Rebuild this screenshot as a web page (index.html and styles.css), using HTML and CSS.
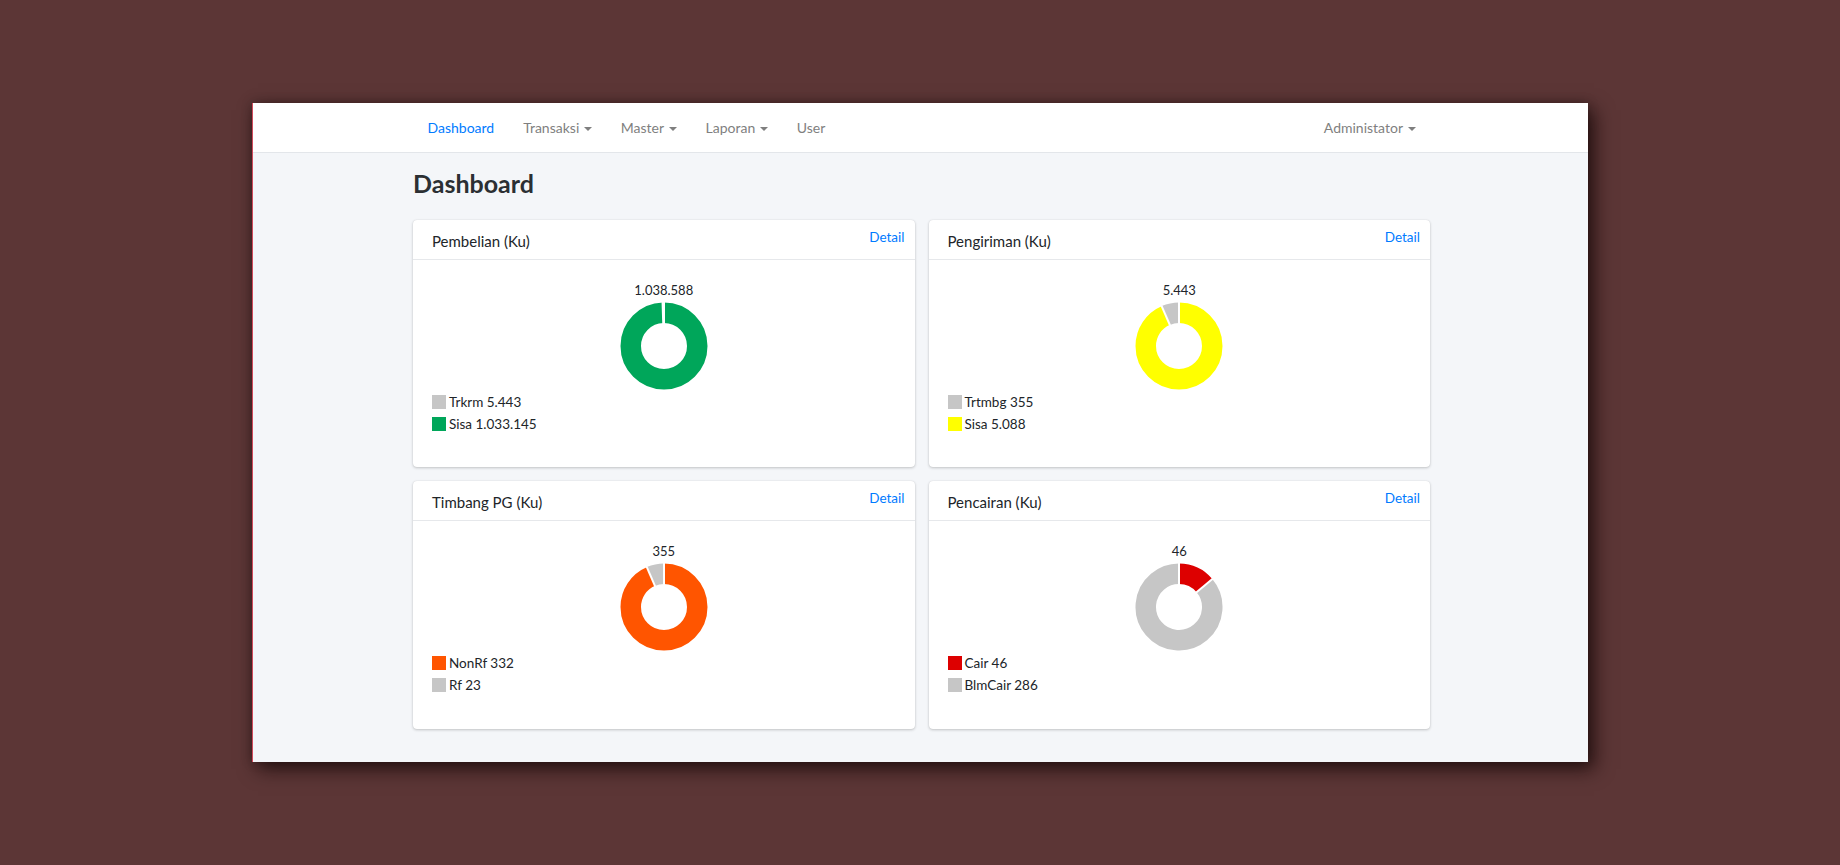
FILE: index.html
```html
<!DOCTYPE html>
<html lang="id">
<head>
<meta charset="utf-8">
<title>Dashboard</title>
<link rel="stylesheet" href="styles.css">
</head>
<body>
<div class="frame">
  <nav class="navbar">
    <div class="nav-inner">
      <ul class="nav-list">
        <li><a class="nav-link active" href="#">Dashboard</a></li>
        <li><a class="nav-link dropdown" href="#">Transaksi</a></li>
        <li><a class="nav-link dropdown" href="#">Master</a></li>
        <li><a class="nav-link dropdown" href="#">Laporan</a></li>
        <li><a class="nav-link" href="#">User</a></li>
      </ul>
      <a class="nav-link dropdown" href="#">Administator</a>
    </div>
  </nav>
  <main class="content">
    <h1 class="page-title">Dashboard</h1>
    <div class="grid">
      <section class="card">
        <header class="card-header">
          <h2 class="card-title">Pembelian (Ku)</h2>
          <a class="detail" href="#">Detail</a>
        </header>
        <div class="card-body">
          <div class="chart-label">1.038.588</div>
          <svg class="donut" width="88" height="88" viewBox="0 0 88 88">
            <circle cx="44" cy="44" r="33.25" fill="none" stroke="#c6c6c6" stroke-width="20.5" stroke-dasharray="1.10 300" transform="rotate(-91.9 44 44)"/>
            <circle cx="44" cy="44" r="33.25" fill="none" stroke="#00a65a" stroke-width="20.5" stroke-dasharray="207.82 300" transform="rotate(-90 44 44)"/>
            <line class="sep" x1="44" y1="23" x2="44" y2="0" transform="rotate(-1.9 44 44)"/>
            <line class="sep" x1="44" y1="23" x2="44" y2="0"/>
          </svg>
          <ul class="legend">
            <li><span class="swatch gray"></span>Trkrm 5.443</li>
            <li><span class="swatch green"></span>Sisa 1.033.145</li>
          </ul>
        </div>
      </section>
      <section class="card">
        <header class="card-header">
          <h2 class="card-title">Pengiriman (Ku)</h2>
          <a class="detail" href="#">Detail</a>
        </header>
        <div class="card-body">
          <div class="chart-label">5.443</div>
          <svg class="donut" width="88" height="88" viewBox="0 0 88 88">
            <circle cx="44" cy="44" r="33.25" fill="none" stroke="#c6c6c6" stroke-width="20.5" stroke-dasharray="13.64 300" transform="rotate(-113.5 44 44)"/>
            <circle cx="44" cy="44" r="33.25" fill="none" stroke="#ffff00" stroke-width="20.5" stroke-dasharray="195.28 300" transform="rotate(-90 44 44)"/>
            <line class="sep" x1="44" y1="23" x2="44" y2="0" transform="rotate(-23.5 44 44)"/>
            <line class="sep" x1="44" y1="23" x2="44" y2="0"/>
          </svg>
          <ul class="legend">
            <li><span class="swatch gray"></span>Trtmbg 355</li>
            <li><span class="swatch yellow"></span>Sisa 5.088</li>
          </ul>
        </div>
      </section>
      <section class="card">
        <header class="card-header">
          <h2 class="card-title">Timbang PG (Ku)</h2>
          <a class="detail" href="#">Detail</a>
        </header>
        <div class="card-body">
          <div class="chart-label">355</div>
          <svg class="donut" width="88" height="88" viewBox="0 0 88 88">
            <circle cx="44" cy="44" r="33.25" fill="none" stroke="#c6c6c6" stroke-width="20.5" stroke-dasharray="13.52 300" transform="rotate(-113.3 44 44)"/>
            <circle cx="44" cy="44" r="33.25" fill="none" stroke="#ff5500" stroke-width="20.5" stroke-dasharray="195.40 300" transform="rotate(-90 44 44)"/>
            <line class="sep" x1="44" y1="23" x2="44" y2="0" transform="rotate(-23.3 44 44)"/>
            <line class="sep" x1="44" y1="23" x2="44" y2="0"/>
          </svg>
          <ul class="legend">
            <li><span class="swatch orange"></span>NonRf 332</li>
            <li><span class="swatch gray"></span>Rf 23</li>
          </ul>
        </div>
      </section>
      <section class="card">
        <header class="card-header">
          <h2 class="card-title">Pencairan (Ku)</h2>
          <a class="detail" href="#">Detail</a>
        </header>
        <div class="card-body">
          <div class="chart-label">46</div>
          <svg class="donut" width="88" height="88" viewBox="0 0 88 88">
            <circle cx="44" cy="44" r="33.25" fill="none" stroke="#dd0000" stroke-width="20.5" stroke-dasharray="28.96 300" transform="rotate(-90 44 44)"/>
            <circle cx="44" cy="44" r="33.25" fill="none" stroke="#c6c6c6" stroke-width="20.5" stroke-dasharray="179.96 300" transform="rotate(-40.1 44 44)"/>
            <line class="sep" x1="44" y1="23" x2="44" y2="0" transform="rotate(49.9 44 44)"/>
            <line class="sep" x1="44" y1="23" x2="44" y2="0"/>
          </svg>
          <ul class="legend">
            <li><span class="swatch red"></span>Cair 46</li>
            <li><span class="swatch gray"></span>BlmCair 286</li>
          </ul>
        </div>
      </section>
    </div>
  </main>
</div>
</body>
</html>
```
FILE: styles.css
```css
* { box-sizing: border-box; }

html, body {
  margin: 0;
  padding: 0;
}

body {
  background: #5c3636;
  font-family: Lato, "Liberation Sans", sans-serif;
  color: #212529;
  padding-top: 103px;
  padding-left: 252px;
  height: 865px;
  overflow: hidden;
}

.frame {
  width: 1336px;
  height: 659px;
  background: #f4f6f9;
  border-left: 1px solid #d24a5c;
  box-shadow: 6px 7px 18px rgba(20, 5, 5, 0.75), 0 0 10px rgba(0, 0, 0, 0.25);
  display: flex;
  flex-direction: column;
}

.navbar {
  background: #fff;
  height: 50px;
  border-bottom: 1px solid #e3e6ea;
  flex: none;
}

.nav-inner {
  width: 1017px;
  margin-left: 160px;
  height: 49px;
  display: flex;
  align-items: center;
  justify-content: space-between;
}

.nav-list {
  list-style: none;
  margin: 0;
  padding: 0;
  display: flex;
  align-items: center;
}

.nav-link {
  display: block;
  padding: 0 14.5px;
  font-size: 14px;
  line-height: 49px;
  color: #7f7f7f;
  text-decoration: none;
}

.nav-link.active {
  color: #007bff;
}

.nav-link.dropdown::after {
  content: "";
  display: inline-block;
  margin-left: 4.5px;
  vertical-align: 2.5px;
  border-top: 4.5px solid #7f7f7f;
  border-left: 4.2px solid transparent;
  border-right: 4.2px solid transparent;
}

.content {
  width: 1017px;
  margin-left: 160px;
  padding-top: 14.5px;
}

.page-title {
  margin: 0 0 22.5px;
  font-size: 25px;
  line-height: 30px;
  font-weight: 700;
  color: #2b2f33;
}

.grid {
  display: grid;
  grid-template-columns: 1fr 1fr;
  grid-template-rows: 247px 248px;
  gap: 14px;
}

.card {
  background: #fff;
  border-radius: 4px;
  box-shadow: 0 0 1px rgba(0, 0, 0, 0.13), 0 1px 3px rgba(0, 0, 0, 0.2);
  display: flex;
  flex-direction: column;
}

.card-header {
  height: 40px;
  border-bottom: 1px solid #e6e8eb;
  display: flex;
  justify-content: space-between;
  align-items: flex-start;
  padding: 0 10px 0 19px;
  flex: none;
}

.card-title {
  margin: 12px 0 0;
  font-size: 15px;
  line-height: 18px;
  font-weight: 400;
  color: #212529;
}

.detail {
  margin-top: 9px;
  font-size: 13.5px;
  line-height: 16px;
  color: #007bff;
  text-decoration: none;
}

.card-body {
  flex: 1;
  padding: 22px 19px 0;
  display: flex;
  flex-direction: column;
}

.chart-label {
  text-align: center;
  font-size: 13px;
  line-height: 16px;
  color: #212529;
}

.donut {
  display: block;
  margin: 4px auto 0;
}

.donut .sep {
  stroke: #fff;
  stroke-width: 2;
}

.legend {
  list-style: none;
  margin: 1px 0 0;
  padding: 0;
}

.legend li {
  display: flex;
  align-items: center;
  height: 22px;
  font-size: 13.5px;
  color: #212529;
}

.swatch {
  width: 14px;
  height: 14.5px;
  margin-right: 3px;
  flex: none;
}

.swatch.gray { background: #c6c6c6; }
.swatch.green { background: #00a65a; }
.swatch.yellow { background: #ffff00; }
.swatch.orange { background: #ff5500; }
.swatch.red { background: #dd0000; }
```
